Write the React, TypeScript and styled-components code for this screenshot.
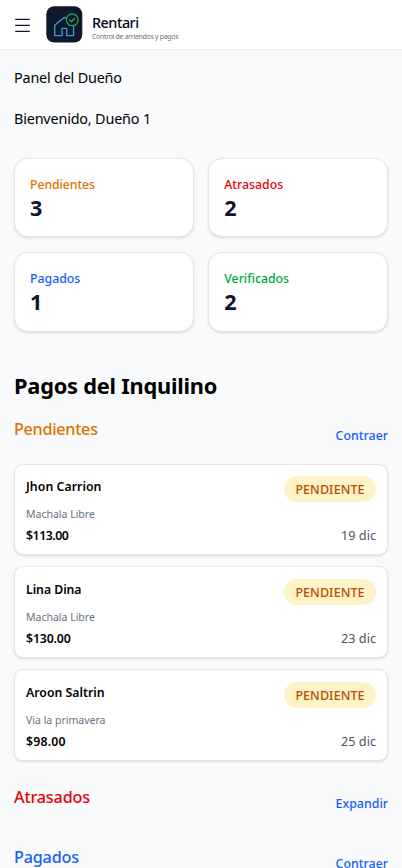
import React from "react";
import styled, { createGlobalStyle } from "styled-components";

const GlobalStyle = createGlobalStyle`
  * { box-sizing: border-box; }
  html, body { margin: 0; padding: 0; background: #f9fafc; }
  body {
    font-family: "Segoe UI", "Noto Sans", "Open Sans", sans-serif;
    color: #000;
    overflow: hidden;
  }
  h1, h2, p { margin: 0; }
  button { border: 0; padding: 0; background: none; font-family: inherit; cursor: pointer; }
`;

const Page = styled.div`
  height: 868px;
  overflow: hidden;
  background: #f9fafc;
`;

const Header = styled.header`
  display: flex;
  align-items: flex-start;
  height: 50px;
  padding: 6px 14px 0;
  background: #fff;
  border-bottom: 1px solid #eceef1;
`;

const MenuButton = styled.button`
  display: block;
  width: 17px;
  height: 37px;
  margin-right: 15px;
`;

const BrandText = styled.div`
  margin-left: 9px;
  padding-top: 7px;
`;

const BrandName = styled.div`
  font-size: 14.4px;
  line-height: 20px;
  font-weight: 500;
  letter-spacing: -0.5px;
  color: #020618;
`;

const Tagline = styled.div`
  font-size: 7px;
  line-height: 8px;
  letter-spacing: -0.32px;
  color: #6a7282;
  white-space: nowrap;
`;

const Main = styled.main`
  padding: 17px 14px 0;
`;

const Intro = styled.p<{ $tracking: number }>`
  font-size: 14.4px;
  line-height: 21px;
  letter-spacing: ${(p) => p.$tracking}px;
  & + & { margin-top: 20px; }
`;

const Stats = styled.section`
  display: grid;
  grid-template-columns: 1fr 1fr;
  gap: 14.6px;
  margin-top: 28.6px;
`;

const StatCard = styled.div`
  height: 79.8px;
  padding: 16px 15px 0;
  background: #fff;
  border: 1px solid #e5e7eb;
  border-radius: 14px;
  box-shadow: 0 1px 3px rgba(0, 0, 0, 0.1), 0 1px 2px -1px rgba(0, 0, 0, 0.1);
`;

const StatLabel = styled.div<{ $color: string; $tracking: number }>`
  font-size: 12.3px;
  line-height: 19px;
  font-weight: 500;
  color: ${(p) => p.$color};
  letter-spacing: ${(p) => p.$tracking}px;
`;

const StatValue = styled.div`
  font-size: 21.6px;
  line-height: 28.4px;
  font-weight: 700;
  color: #0f172b;
`;

const Title = styled.h1`
  margin: 38px 0 15px;
  font-size: 21.8px;
  line-height: 32px;
  font-weight: 700;
  letter-spacing: -0.23px;
  white-space: nowrap;
`;

const Group = styled.section`
  & + & { margin-top: 21.7px; }
`;

const GroupHead = styled.div`
  display: flex;
  justify-content: space-between;
  align-items: flex-start;
  height: 38px;
`;

const GroupTitle = styled.h2<{ $color: string; $tracking: number }>`
  font-size: 16.2px;
  line-height: 24px;
  font-weight: 500;
  color: ${(p) => p.$color};
  letter-spacing: ${(p) => p.$tracking}px;
`;

const Toggle = styled.button`
  margin-top: 9px;
  font-size: 12.4px;
  line-height: 20px;
  font-weight: 500;
  color: #155dfc;
`;

const Payments = styled.div`
  display: grid;
  gap: 10.9px;
  padding: 8.8px 0 3px;
`;

const PaymentCard = styled.article`
  height: 91.8px;
  padding: 11.6px 11px 0;
  background: #fff;
  border: 1px solid #e5e7eb;
  border-radius: 9px;
  box-shadow: 0 1px 3px rgba(0, 0, 0, 0.1), 0 1px 2px -1px rgba(0, 0, 0, 0.1);
`;

const Row = styled.div`
  display: flex;
  justify-content: space-between;
  align-items: flex-start;
`;

const Tenant = styled.div<{ $tracking: number }>`
  font-size: 12.3px;
  line-height: 22px;
  font-weight: 600;
  letter-spacing: ${(p) => p.$tracking}px;
`;

const Badge = styled.span`
  width: 92px;
  height: 26px;
  border-radius: 13px;
  background: #fef3c6;
  color: #bb4d00;
  font-size: 12.5px;
  line-height: 28.4px;
  font-weight: 500;
  letter-spacing: 0.08px;
  text-align: center;
`;

const Property = styled.div`
  margin: 3px 0;
  font-size: 10.5px;
  line-height: 18px;
  color: #6a7282;
`;

const Amount = styled.div<{ $tracking: number }>`
  font-size: 12.3px;
  line-height: 20px;
  font-weight: 600;
  letter-spacing: ${(p) => p.$tracking}px;
`;

const DueDate = styled.div`
  font-size: 12.7px;
  line-height: 18.6px;
  color: #4a5565;
`;

const MenuIcon = () => (
  <svg width="17" height="37" viewBox="0 0 17 37" fill="none" stroke="#111827" strokeWidth="1.3">
    <path d="M1.2 13.3H15.8M1.2 19.4H15.8M1.2 25.4H15.8" />
  </svg>
);

const Logo = () => (
  <svg width="37" height="37" viewBox="0 0 37 37" fill="none" strokeLinejoin="round" strokeLinecap="round">
    <rect x="0.3" y="0.2" width="36" height="36.4" rx="8" fill="#0f172a" />
    <path
      d="M19.7 12.2L18.4 11.3L8.7 19.3V29.6H16V22.4H20.7V29.6H27.6V20"
      stroke="#3b9de8"
      strokeWidth="1.3"
    />
    <circle cx="26.2" cy="13.8" r="5.9" stroke="#20b15a" strokeWidth="1.2" />
    <path d="M23.6 14L25.4 15.7L28.8 12.2" stroke="#20b15a" strokeWidth="1.3" />
  </svg>
);

const stats = [
  { label: "Pendientes", value: 3, color: "#e17100", tracking: -0.08 },
  { label: "Atrasados", value: 2, color: "#e7000b", tracking: 0 },
  { label: "Pagados", value: 1, color: "#155dfc", tracking: 0 },
  { label: "Verificados", value: 2, color: "#00a63e", tracking: 0 },
];

const payments = [
  { tenant: "Jhon Carrion", property: "Machala Libre", amount: "$113.00", due: "19 dic", tracking: 0.05, amountTracking: -0.45 },
  { tenant: "Lina Dina", property: "Machala Libre", amount: "$130.00", due: "23 dic", tracking: -0.05, amountTracking: -0.15 },
  { tenant: "Aroon Saltrin", property: "Via la primavera", amount: "$98.00", due: "25 dic", tracking: 0, amountTracking: 0.2 },
];

const groups = [
  { title: "Pendientes", action: "Contraer", color: "#e17100", tracking: -0.28, items: payments },
  { title: "Atrasados", action: "Expandir", color: "#e7000b", tracking: -0.18, items: [] },
  { title: "Pagados", action: "Contraer", color: "#155dfc", tracking: -0.2, items: [] },
];

export default function App() {
  return (
    <Page>
      <GlobalStyle />
      <Header>
        <MenuButton aria-label="Menú">
          <MenuIcon />
        </MenuButton>
        <Logo />
        <BrandText>
          <BrandName>Rentari</BrandName>
          <Tagline>Control de arriendos y pagos</Tagline>
        </BrandText>
      </Header>
      <Main>
        <Intro $tracking={-0.2}>Panel del Dueño</Intro>
        <Intro $tracking={-0.18}>Bienvenido, Dueño 1</Intro>
        <Stats>
          {stats.map((s) => (
            <StatCard key={s.label}>
              <StatLabel $color={s.color} $tracking={s.tracking}>{s.label}</StatLabel>
              <StatValue>{s.value}</StatValue>
            </StatCard>
          ))}
        </Stats>
        <Title>Pagos del Inquilino</Title>
        {groups.map((g) => (
          <Group key={g.title}>
            <GroupHead>
              <GroupTitle $color={g.color} $tracking={g.tracking}>{g.title}</GroupTitle>
              <Toggle>{g.action}</Toggle>
            </GroupHead>
            {g.items.length > 0 && (
              <Payments>
                {g.items.map((p) => (
                  <PaymentCard key={p.tenant}>
                    <Row>
                      <Tenant $tracking={p.tracking}>{p.tenant}</Tenant>
                      <Badge>PENDIENTE</Badge>
                    </Row>
                    <Property>{p.property}</Property>
                    <Row>
                      <Amount $tracking={p.amountTracking}>{p.amount}</Amount>
                      <DueDate>{p.due}</DueDate>
                    </Row>
                  </PaymentCard>
                ))}
              </Payments>
            )}
          </Group>
        ))}
      </Main>
    </Page>
  );
}
